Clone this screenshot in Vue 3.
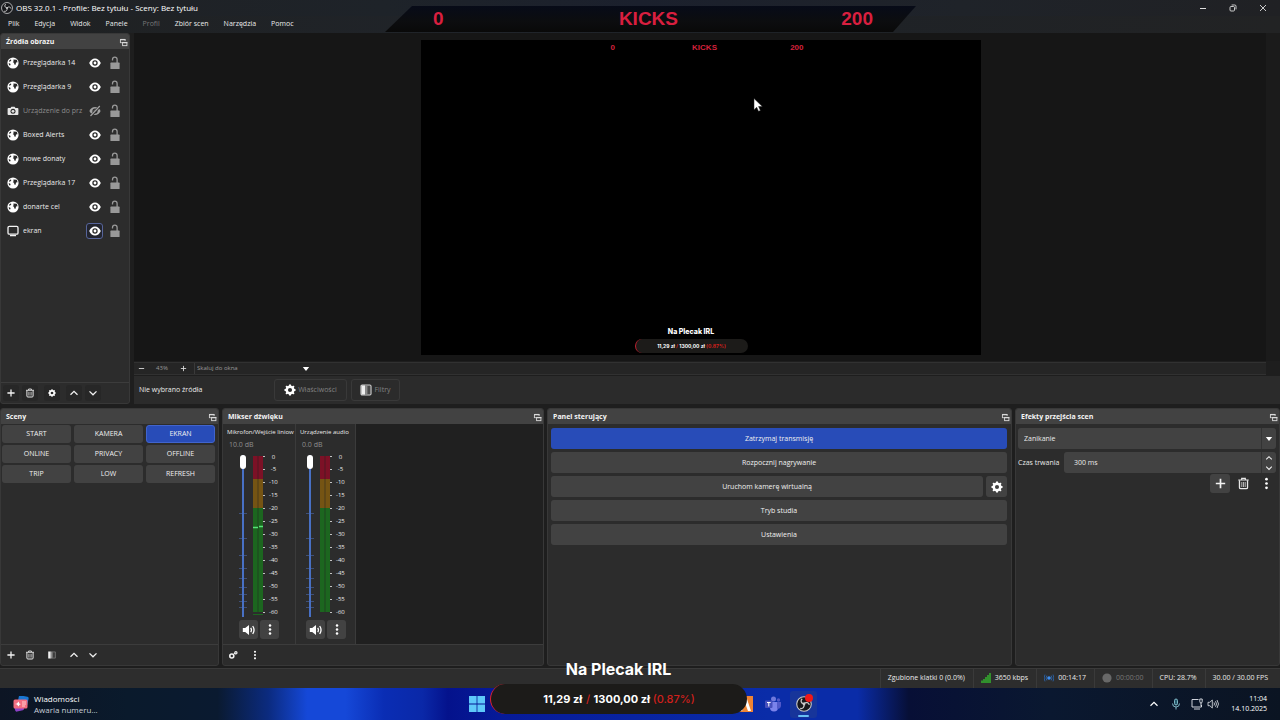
<script setup>
import { ref } from 'vue'

const menus = [
  { name: 'Plik' }, { name: 'Edycja' }, { name: 'Widok' }, { name: 'Panele' },
  { name: 'Profil', off: true }, { name: 'Zbiór scen' }, { name: 'Narzędzia' }, { name: 'Pomoc' }
]

const sources = [
  { name: 'Przeglądarka 14', icon: 'globe' },
  { name: 'Przeglądarka 9', icon: 'globe' },
  { name: 'Urządzenie do prz', icon: 'camera', hidden: true },
  { name: 'Boxed Alerts', icon: 'globe' },
  { name: 'nowe donaty', icon: 'globe' },
  { name: 'Przeglądarka 17', icon: 'globe' },
  { name: 'donarte cel', icon: 'globe' },
  { name: 'ekran', icon: 'monitor', focus: true }
]

const scenes = ['START', 'KAMERA', 'EKRAN', 'ONLINE', 'PRIVACY', 'OFFLINE', 'TRIP', 'LOW', 'REFRESH']
const activeScene = ref('EKRAN')

const channels = [
  { name: 'Mikrofon/Wejście liniow', db: '10.0 dB', peak: true },
  { name: 'Urządzenie audio', db: '0.0 dB', peak: false }
]
const scale = [0, -5, -10, -15, -20, -25, -30, -35, -40, -45, -50, -55, -60]
const faderTicks = [58, 83, 100, 113, 123, 132, 139, 146, 152]
</script>

<template>
  <div class="desktop">
    <svg class="defs" aria-hidden="true">
      <symbol id="globe" viewBox="0 0 12 12">
        <circle cx="6" cy="6" r="5.6" fill="#fff" />
        <path d="M6.4 2.400 9.800 2.800l.8 2.400-1.600.4-.4 2.200-1.300-.3-.3-1.700-1.200-.6.800-1z M2.200 3.600l1.400-1.200.8.500-.6 1.200-1.500 1z M1.600 6.200l1.500.3.500 1-.5 1.100-.9-.4z" fill="#2b2b2b" />
      </symbol>
      <symbol id="camera" viewBox="0 0 12 12">
        <path d="M1.500 3h2l.9-1.300h3.200L8.500 3h2q.9 0 .9.9v5.200q0 .9-.9.9h-9q-.9 0-.9-.9V3.900q0-.9.9-.9z" fill="#e6e6e6" />
        <circle cx="6" cy="6.300" r="2.500" fill="#2b2b2b" /><circle cx="6" cy="6.300" r="1.400" fill="#e6e6e6" />
      </symbol>
      <symbol id="monitor" viewBox="0 0 12 12">
        <rect x="1" y="1.400" width="10" height="7.800" rx="1.300" fill="none" stroke="#f4f4f4" stroke-width="1.300" />
        <path d="M3 10.600h6" stroke="#f4f4f4" stroke-width="1.200" />
      </symbol>
      <symbol id="eye" viewBox="0 0 12 12">
        <path d="M.2 6Q2.300 1.400 6 1.400T11.800 6Q9.700 10.600 6 10.600T.2 6z" fill="#fff" />
        <circle cx="6" cy="6" r="2.700" fill="#2b2b2b" /><circle cx="6" cy="6" r="1.400" fill="#fff" />
      </symbol>
      <symbol id="eyeoff" viewBox="0 0 12 12">
        <path d="M.4 6Q2.300 1.900 6 1.900T11.600 6Q9.700 10.100 6 10.100T.4 6z" fill="#a2a2a2" />
        <circle cx="6" cy="6" r="2.600" fill="#2b2b2b" /><circle cx="6" cy="6" r="1.300" fill="#a2a2a2" />
        <path d="M1.300 11.600 11.300.8" stroke="#2b2b2b" stroke-width="2.600" /><path d="M1.500 11 10.800 1" stroke="#a2a2a2" stroke-width="1.200" />
      </symbol>
      <symbol id="lock" viewBox="0 0 12 14">
        <path d="M3.500 4.600V3.400a2.300 2.300 0 0 1 4.600 0V7" fill="none" stroke="#989898" stroke-width="1.300" />
        <rect x="1.400" y="6.600" width="9.200" height="6.400" rx=".6" fill="#989898" />
      </symbol>
      <symbol id="float" viewBox="0 0 10 10">
        <path d="M1.600 5.600V1.600h5.200v1.600" fill="none" stroke="#dadada" /><path d="M1.200 1.700h6" stroke="#dadada" stroke-width="1.400" /><path d="M1.600 5.200h1.600" stroke="#dadada" />
        <rect x="4" y="4.900" width="4.800" height="3.600" fill="#424242" stroke="#dadada" /><path d="M3.600 5.200h5.600" stroke="#dadada" stroke-width="1.400" />
      </symbol>
      <symbol id="plus" viewBox="0 0 10 10"><path d="M5 1.400v7.200M1.400 5h7.200" stroke="#f2f2f2" stroke-width="1.300" /></symbol>
      <symbol id="trash" viewBox="0 0 10 10">
        <path d="M1 2.300h8M3.600 2V1h2.800v1" fill="none" stroke="#e8e8e8" stroke-width=".9" />
        <path d="M1.900 2.500v5.500q0 1 1 1h4.200q1 0 1-1V2.500" fill="none" stroke="#e8e8e8" />
        <path d="M3.700 3.800v3.800M5 3.800v3.800M6.300 3.800v3.800" stroke="#b4b4b4" stroke-width=".8" />
      </symbol>
      <symbol id="gear" viewBox="0 0 12 12">
        <circle cx="6" cy="6" r="3.300" fill="none" stroke="#fff" stroke-width="2.500" />
        <path d="M6 .5v2M6 9.500v2M.5 6h2M9.500 6h2M2.100 2.100l1.500 1.500M8.400 8.400l1.500 1.500M2.100 9.900l1.500-1.500M8.400 3.600l1.500-1.500" stroke="#fff" stroke-width="2" />
      </symbol>
      <symbol id="up" viewBox="0 0 10 10"><path d="M1.500 6.800 5 3.400l3.500 3.400" fill="none" stroke="#f2f2f2" stroke-width="1.300" /></symbol>
      <symbol id="down" viewBox="0 0 10 10"><path d="M1.500 3.400 5 6.800l3.500-3.400" fill="none" stroke="#f2f2f2" stroke-width="1.300" /></symbol>
      <symbol id="caret" viewBox="0 0 8 6"><path d="M.8 1h6.400L4 5z" fill="#fff" /></symbol>
      <symbol id="filter" viewBox="0 0 10 10">
        <rect x=".8" y=".8" width="8.400" height="8.400" rx="1" fill="#4a4a4a" stroke="#cfcfcf" stroke-width=".9" />
        <path d="M1.200 1.200h3v7.600h-3z" fill="#f0f0f0" /><path d="M4.200 1.200h2v7.600h-2z" fill="#8c8c8c" />
      </symbol>
      <symbol id="filtersm" viewBox="0 0 10 10">
        <path d="M1.200 1.500h2.600v7H1.200z" fill="#f0f0f0" /><path d="M3.800 1.500h2v7h-2z" fill="#8c8c8c" />
        <path d="M5.800 1.900h2.600v6.200H5.800" fill="#3c3c3c" stroke="#777" stroke-width=".8" />
      </symbol>
      <symbol id="dots" viewBox="0 0 4 12"><circle cx="2" cy="2" r="1.250" fill="#fff" /><circle cx="2" cy="6" r="1.250" fill="#fff" /><circle cx="2" cy="10" r="1.250" fill="#fff" /></symbol>
      <symbol id="speaker" viewBox="0 0 14 12">
        <path d="M.8 4h2.400L7 .9v10.200L3.200 8H.8z" fill="#fff" />
        <path d="M8.700 3.800q1.500 2.200 0 4.400M10.700 2q2.700 4 0 8" fill="none" stroke="#fff" stroke-width="1.300" />
      </symbol>
      <symbol id="gears" viewBox="0 0 10 10">
        <circle cx="3.800" cy="6" r="2" fill="none" stroke="#f2f2f2" stroke-width="1.600" />
        <circle cx="7.900" cy="2.800" r="1.100" fill="none" stroke="#f2f2f2" stroke-width="1.200" /><path d="M5 4.600 7 3.300" stroke="#f2f2f2" />
      </symbol>
      <symbol id="obs" viewBox="0 0 16 16">
        <circle cx="8" cy="8" r="7.300" fill="#17181b" stroke="#c9c9c9" stroke-width="1.100" />
        <path d="M7.600 7.800C4.600 7 4.500 4.300 6.200 2.800M8 7.800c2-2.200 4.800-1.200 5.300 1M8 8.200c.8 3-1.400 4.800-3.800 4.200" fill="none" stroke="#c9c9c9" stroke-width="1.300" />
        <circle cx="8" cy="8" r="1.400" fill="#c9c9c9" />
      </symbol>
    </svg>

    <header class="titlebar">
      <svg class="i12"><use href="#obs" /></svg>
      <span class="title">OBS 32.0.1 - Profile: Bez tytułu - Sceny: Bez tytułu</span>
      <div class="winbtns">
        <button aria-label="Minimalizuj"><svg viewBox="0 0 8 8"><path d="M1 4.500h6" stroke="#ddd" /></svg></button>
        <button aria-label="Przywróć"><svg viewBox="0 0 8 8"><rect x="1" y="2.500" width="4.500" height="4.500" rx="1" fill="none" stroke="#ddd" stroke-width=".9" /><path d="M2.600 1h3.200Q7 1 7 2.200v3.200" fill="none" stroke="#ddd" stroke-width=".9" /></svg></button>
        <button aria-label="Zamknij"><svg viewBox="0 0 8 8"><path d="M1 1l6 6M7 1 1 7" stroke="#ddd" stroke-width=".9" /></svg></button>
      </div>
    </header>
    <nav class="menubar">
      <button v-for="m in menus" :key="m.name" :disabled="m.off">{{ m.name }}</button>
    </nav>

    <main class="upper">
      <section class="dock sources">
        <h2>Źródła obrazu<svg class="i10"><use href="#float" /></svg></h2>
        <ul>
          <li v-for="s in sources" :key="s.name" :class="{ off: s.hidden }">
            <svg class="i12"><use :href="'#' + s.icon" /></svg>
            <span>{{ s.name }}</span>
            <button class="vis" :class="{ focus: s.focus }" aria-label="Widoczność"><svg class="i12"><use :href="s.hidden ? '#eyeoff' : '#eye'" /></svg></button>
            <button class="lk" aria-label="Zablokuj"><svg><use href="#lock" /></svg></button>
          </li>
        </ul>
        <footer class="tools">
          <button v-for="t in ['plus', 'trash', 'gear', 'up', 'down']" :key="t" :aria-label="t"><svg class="i10" :class="t"><use :href="'#' + t" /></svg></button>
        </footer>
      </section>

      <section class="stage">
        <div class="preview">
          <div class="canvas">
            <div class="mini-kicks"><span>0</span><span>KICKS</span><span>200</span></div>
            <div class="mini-goal">
              <b>Na Plecak IRL</b>
              <p>11,29 zł <i>/</i> 1300,00 zł <em>(0.87%)</em></p>
            </div>
            <svg class="cursor" viewBox="0 0 10 14"><path d="M1 .5v11.300l2.700-2.500 1.800 4 1.900-.8-1.800-4h3.700z" fill="#fff" stroke="#222" stroke-width=".5" /></svg>
          </div>
        </div>
        <div class="zoombar">
          <button aria-label="Pomniejsz"><svg viewBox="0 0 8 8"><path d="M1 4h6" stroke="#ddd" /></svg></button>
          <span>43%</span>
          <button aria-label="Powiększ"><svg viewBox="0 0 8 8"><path d="M1 4h6M4 1v6" stroke="#ddd" /></svg></button>
          <div class="fit"><select aria-label="Skalowanie"><option>Skaluj do okna</option></select><svg><use href="#caret" /></svg></div>
        </div>
        <div class="context">
          <span>Nie wybrano źródła</span>
          <button class="wide" disabled><svg class="i12"><use href="#gear" /></svg>Właściwości</button>
          <button class="narrow" disabled><svg class="i12"><use href="#filter" /></svg>Filtry</button>
        </div>
      </section>
    </main>

    <div class="docks">
      <section class="dock">
        <h2>Sceny<svg class="i10"><use href="#float" /></svg></h2>
        <div class="grid">
          <button v-for="s in scenes" :key="s" class="btn" :class="{ active: s === activeScene }" @click="activeScene = s">{{ s }}</button>
        </div>
        <footer class="tools">
          <button v-for="t in ['plus', 'trash', 'filtersm', 'up', 'down']" :key="t" :aria-label="t"><svg class="i10"><use :href="'#' + t" /></svg></button>
        </footer>
      </section>

      <section class="dock">
        <h2>Mikser dźwięku<svg class="i10"><use href="#float" /></svg></h2>
        <div class="mixer">
          <div v-for="(c, n) in channels" :key="c.name" class="channel" :class="{ first: n === 0 }">
            <label :for="'vol' + n">{{ c.name }}</label>
            <small>{{ c.db }}</small>
            <div class="levels">
              <div class="fader">
                <svg viewBox="0 0 8 162"><path v-for="t in faderTicks" :key="t" :d="`M0 ${t}.500h8`" stroke="#3f5078" /></svg>
                <input :id="'vol' + n" type="range" min="0" max="100" value="100">
              </div>
              <svg class="meter" viewBox="0 0 14 162">
                <path d="M0 1h10v23H0z" fill="#7c1126" /><path d="M0 24h10v29H0z" fill="#755413" /><path d="M0 53h10v104H0z" fill="#1c661f" />
                <path d="M5 1v156" stroke="#222" stroke-opacity=".5" />
                <path v-for="(s, k) in scale" :key="s" :d="`M10 ${k * 13 + 1}.500h2`" stroke="#c4c4c4" />
                <g v-if="c.peak"><path d="M0 72.500h5M6 71.500h4" stroke="#55e578" stroke-width="1.500" /><path d="M0 159.500h10" stroke="#1c661f" /></g>
              </svg>
              <ol><li v-for="s in scale" :key="s">{{ s }}</li></ol>
            </div>
            <div class="chbtns">
              <button class="btn" aria-label="Wycisz"><svg class="spk"><use href="#speaker" /></svg></button>
              <button class="btn" aria-label="Opcje"><svg class="dot"><use href="#dots" /></svg></button>
            </div>
          </div>
        </div>
        <footer class="tools mixtools">
          <button aria-label="Zaawansowane"><svg class="i10"><use href="#gears" /></svg></button>
          <button aria-label="Opcje miksera"><svg class="i10"><use href="#dots" /></svg></button>
        </footer>
      </section>

      <section class="dock">
        <h2>Panel sterujący<svg class="i10"><use href="#float" /></svg></h2>
        <div class="controls">
          <button class="btn active">Zatrzymaj transmisję</button>
          <button class="btn">Rozpocznij nagrywanie</button>
          <div class="pair"><button class="btn">Uruchom kamerę wirtualną</button><button class="btn sq" aria-label="Konfiguruj kamerę"><svg class="i12"><use href="#gear" /></svg></button></div>
          <button class="btn">Tryb studia</button>
          <button class="btn">Ustawienia</button>
        </div>
      </section>

      <section class="dock">
        <h2>Efekty przejścia scen<svg class="i10"><use href="#float" /></svg></h2>
        <div class="trans">
          <div class="combo"><select aria-label="Przejście"><option>Zanikanie</option></select><svg><use href="#caret" /></svg></div>
          <div class="dur">
            <label for="dur">Czas trwania</label>
            <div class="spin">
              <input id="dur" type="text" value="300 ms">
              <div><button aria-label="Więcej"><svg><use href="#up" /></svg></button><button aria-label="Mniej"><svg><use href="#down" /></svg></button></div>
            </div>
          </div>
          <div class="tbtns">
            <button class="btn" aria-label="Dodaj"><svg><use href="#plus" /></svg></button>
            <button aria-label="Usuń"><svg><use href="#trash" /></svg></button>
            <button aria-label="Więcej opcji"><svg><use href="#dots" /></svg></button>
          </div>
        </div>
      </section>
    </div>

    <div class="status">
      <span>Zgubione klatki 0 (0.0%)</span>
      <span><svg class="i10" viewBox="0 0 10 10"><path d="M1 10V7.500M3 10V6M5 10V4M7 10V2M9 10V0" stroke="#35c72e" stroke-width="1.300" /></svg>3650 kbps</span>
      <span><svg class="i10" viewBox="0 0 10 10"><circle cx="5" cy="5" r="1.800" fill="#3d8df0" /><path d="M2.800 2.600q-1.600 2.400 0 4.800M7.200 2.600q1.600 2.400 0 4.800M1 1.600q-1.800 3.400 0 6.800M9 1.600q1.800 3.400 0 6.800" fill="none" stroke="#2a62a8" stroke-width=".9" /></svg>00:14:17</span>
      <span class="dim"><svg class="i10" viewBox="0 0 10 10"><circle cx="5" cy="5" r="4.600" fill="#686868" /></svg>00:00:00</span>
      <span>CPU: 28.7%</span>
      <span>30.00 / 30.00 FPS</span>
    </div>

    <footer class="taskbar">
      <a class="news" href="#">
        <svg viewBox="0 0 16 16"><rect x="5" y="0" width="10" height="9" rx="1.500" fill="#1976d2" transform="rotate(12 10 5)" /><rect x="1.500" y="7" width="9" height="8" rx="1.500" fill="#8d42c8" transform="rotate(-14 6 11)" /><rect x=".5" y="3.500" width="14" height="9" rx="1.500" fill="#f26d80" /><path d="m5.500 5.500 1 2.200 1.500.3-1.500.8-1 1.700L4 8.500 2 8l2-.6z" fill="#fff" /><path d="M9 6h4M9 8h4M9 10h3" stroke="#ffd0d0" /></svg>
        <span><b>Wiadomości</b>Awaria numeru...</span>
      </a>
      <div class="apps">
        <button aria-label="Start"><svg viewBox="0 0 16 16"><path d="M0 0h7.600v7.600H0zM8.400 0H16v7.600H8.400zM0 8.400h7.600V16H0zM8.400 8.400H16V16H8.400z" fill="#5ec8fa" /></svg></button>
        <button class="orange" aria-label="Aplikacja"><svg viewBox="0 0 16 16"><rect width="16" height="16" fill="#ee8434" /><path d="m3 15 4-12h3l4 12h-3l-3-8-3 8z" fill="#fff" /></svg></button>
        <button class="teams" aria-label="Teams"><svg viewBox="0 0 16 16"><circle cx="8.500" cy="3" r="2.500" fill="#6f78dc" /><circle cx="13.500" cy="4" r="1.700" fill="#5059c9" /><path d="M5 6h8v5.500a4 4 0 0 1-8 0z" fill="#7b83eb" /><path d="M12 6h4v4a3 3 0 0 1-4 2.600z" fill="#5059c9" /><rect y="4.500" width="7.500" height="7.500" rx="1" fill="#4650bd" /><path d="M2 6.500h3.600M3.800 6.500v4" stroke="#fff" /></svg></button>
        <button class="obsapp" aria-label="OBS"><svg viewBox="0 0 16 16"><use href="#obs" /></svg></button>
      </div>
      <div class="tray">
        <svg viewBox="0 0 10 10"><path d="M1.500 6.800 5 3.400l3.500 3.400" fill="none" stroke="#fff" stroke-width="1.200" /></svg>
        <svg class="mic" viewBox="0 0 10 12"><rect x="3.500" y="1" width="3" height="6" rx="1.500" fill="#24586a" stroke="#8ac5d2" stroke-width=".9" /><path d="M1.500 5.500a3.500 3.500 0 0 0 7 0M5 9v2.500" fill="none" stroke="#8ac5d2" stroke-width=".9" /></svg>
        <svg class="net" viewBox="0 0 12 12"><path d="M7.500 1.500H1v7.500h9.500V7" fill="none" stroke="#e4e8ee" stroke-width=".9" /><path d="M3 11h6M8.800 1v2.500q0 1.500 1.200 1.500t1.200-1.500V1zM10 5v3" fill="none" stroke="#e4e8ee" stroke-width=".9" /></svg>
        <svg class="vol" viewBox="0 0 12 12"><path d="M1 4.300h1.800L5.300 2v8L2.800 7.700H1z" fill="none" stroke="#e4e8ee" stroke-width=".8" /><path d="M7 4.500q1 1.500 0 3M8.500 3.200q2 2.800 0 5.600M10 2q3 4 0 8" fill="none" stroke="#e4e8ee" stroke-width=".8" /></svg>
        <time>11:04<br>14.10.2025</time>
      </div>
    </footer>

    <div class="kicks"><span>0</span><span>KICKS</span><span>200</span></div>
    <div class="goal">
      <b>Na Plecak IRL</b>
      <p>11,29 zł <i>/</i> 1300,00 zł <em>(0.87%)</em></p>
    </div>
  </div>
</template>

<style>
html, body { margin: 0; background: #1f1f1f; }
</style>

<style scoped>
* { box-sizing: border-box; margin: 0; padding: 0; }
.desktop { position: relative; display: flex; flex-direction: column; height: 100vh; overflow: hidden; background: #1e1e1e; color: #eaeaea; font: 7px/12px "Open Sans", "Noto Sans", sans-serif; }
.defs { position: absolute; width: 0; height: 0; }
button, input, select { font: inherit; color: inherit; background: none; border: 0; outline: 0; }
button { display: flex; align-items: center; justify-content: center; }
select { appearance: none; }
svg { display: block; flex: none; }
.i12 { width: 12px; height: 12px; }
.i10 { width: 10px; height: 10px; }

.titlebar { display: flex; align-items: center; gap: 3px; height: 16px; padding: 0 2px 0 1px; background: linear-gradient(90deg, #1f2124, #1e2329 30%, #1b202d 50%, #1f2329 75%, #202124); color: #fff; font-size: 8px; }
.winbtns { display: flex; margin-left: auto; }
.winbtns button { width: 30px; height: 14px; }
.winbtns svg { width: 8px; height: 8px; }
.menubar { display: flex; gap: 1px; height: 17px; padding-left: 1px; background: linear-gradient(90deg, #1f2122, #20242a 40%, #1e2227 60%, #222324); }
.menubar button { padding: 0 7px; height: 16px; }
.menubar button:disabled { color: #777; }

.upper { flex: 1; min-height: 0; display: flex; gap: 4px; }
.dock { display: flex; flex-direction: column; min-width: 0; min-height: 0; background: #2c2c2c; border: 1px solid #383838; border-radius: 3px; overflow: hidden; }
.dock h2 { display: flex; align-items: center; justify-content: space-between; height: 15px; flex: none; padding: 0 1px 0 5px; background: #424242; color: #f4f4f4; font-size: 7px; font-weight: 700; }
.dock h2 svg { width: 9px; height: 9px; margin-top: 2px; }
.sources { width: 130px; }
.sources ul { flex: 1; list-style: none; padding-top: 2px; }
.sources li { display: flex; align-items: center; height: 24px; padding: 0 8px 0 6px; }
.sources li span { flex: 1; min-width: 0; margin: 0 2px 0 4px; overflow: hidden; white-space: nowrap; }
.sources .off span { color: #8b8b8b; }
.vis { width: 17px; height: 16px; border: 1px solid transparent; border-radius: 3px; }
.vis.focus { border-color: #56649a; background: #22242e; }
.lk { width: 12px; margin-left: 6px; }
.lk svg { width: 12px; height: 14px; }
.tools { display: flex; align-items: center; gap: 3px; height: 21px; flex: none; border-top: 1px solid #3c3c3c; padding-left: 2px; }
.tools button { width: 16px; height: 16px; }
.tools button:nth-child(3) { margin: 0 3px; }
.tools .gear { width: 8px; height: 8px; }
.sources .tools button { background: #272727; border-radius: 3px; }
.mixtools { gap: 6px; }

.stage { flex: 1; min-width: 0; display: flex; flex-direction: column; }
.preview { flex: 1; min-height: 0; background: #161616; border-right: 14px solid #1b1b1b; display: flex; justify-content: center; padding: 7px 0 6px 1px; }
.canvas { position: relative; aspect-ratio: 16 / 9; height: 100%; background: #000; }
.mini-kicks { position: absolute; top: 2px; left: 190px; right: 177px; display: flex; justify-content: space-between; color: #d5203c; font: 700 8px/12px "Liberation Sans", sans-serif; }
.mini-kicks span:nth-child(2) { margin-left: 4px; }
.mini-goal, .goal { text-align: center; color: #fff; font-family: Inter, sans-serif; }
.mini-goal { position: absolute; bottom: 2px; left: 50%; width: 113px; margin-left: -66px; }
.mini-goal b { display: block; font-size: 7px; line-height: 10px; font-weight: 800; }
.mini-goal p { margin-top: 2px; height: 14px; border-radius: 7px; background: #1c1b19; border-left: 1px solid #c02030; font-size: 5px; line-height: 14px; font-weight: 700; }
i, em { font-style: normal; color: #d0201c; }
.cursor { position: absolute; left: 332px; top: 58px; width: 10px; height: 14px; }
.zoombar { display: flex; align-items: center; height: 13px; background: #252525; border: 1px solid #313131; border-width: 1px 0; margin: 1px 14px 0 0; color: #999; font-size: 6px; line-height: 11px; }
.zoombar button { width: 14px; height: 11px; }
.zoombar button svg { width: 7px; height: 7px; }
.zoombar > span { width: 28px; text-align: center; }
.fit { display: flex; align-items: center; width: 116px; margin-left: 4px; border-left: 1px solid #3a3a3a; }
.fit select { flex: 1; padding-left: 2px; }
.fit svg { width: 8px; height: 6px; }
.context { display: flex; align-items: center; height: 28px; margin-top: 1px; padding-left: 5px; background: #2b2b2b; }
.context > span { width: 135px; }
.context button { height: 22px; gap: 2px; border: 1px solid #393939; border-radius: 3px; color: #828282; }
.wide { width: 73px; }
.narrow { width: 49px; margin-left: 4px; }

.docks { display: grid; grid-template-columns: 219px 322px minmax(0, 1fr) 265px; gap: 3px; height: 258px; margin-top: 4px; }
.btn { height: 21px; border-radius: 3px; background: #424242; color: #f0f0f0; }
.btn.active { background: #284cb8; }
.grid { flex: 1; display: grid; grid-template-columns: repeat(3, 1fr); grid-auto-rows: 18px; gap: 2px 3px; padding: 1px 3px 0 1px; }
.grid .btn { height: 18px; }
.grid .btn.active { border: 1px solid #4164cc; }
.mixer { flex: 1; display: flex; background: #202020; }
.channel { width: 60px; padding: 2px 3px 0 4px; background: #2c2c2c; border-right: 1px solid #3b3b3b; }
.channel.first { width: 73px; padding-right: 0; }
.channel label { display: block; white-space: nowrap; font-size: 6px; line-height: 12px; }
.channel small { display: block; margin-left: 2px; color: #8e8e8e; font-size: 7px; line-height: 14px; }
.levels { display: flex; height: 162px; margin-top: 3px; padding-left: 6px; }
.first .levels { padding-left: 12px; }
.fader { position: relative; width: 8px; margin-right: 6px; }
.fader svg { width: 8px; height: 162px; }
.fader input { position: absolute; left: 0; top: 0; width: 8px; height: 162px; appearance: none; writing-mode: vertical-lr; direction: rtl; }
.fader input::-webkit-slider-runnable-track { width: 2px; height: 162px; margin: 0 3px; background: #4870c4; }
.fader input::-webkit-slider-thumb { appearance: none; width: 6px; height: 14px; margin-left: -2px; border-radius: 3px; background: #fff; }
.meter { width: 14px; height: 162px; }
.levels ol { list-style: none; font-size: 6px; line-height: 13px; margin: -5px 0 0 2px; text-align: center; }
.levels li { height: 13px; }
.levels li:first-child { padding-top: 1px; }
.chbtns { display: flex; gap: 2px; padding-left: 6px; margin-top: 3px; }
.first .chbtns { padding-left: 12px; }
.chbtns .btn { width: 19px; height: 19px; }
.spk { width: 14px; height: 12px; }
.dot { width: 4px; height: 13px; }
.controls { display: flex; flex-direction: column; gap: 3px; padding: 4px 4px 0 3px; }
.pair { display: flex; gap: 3px; }
.pair .btn:first-child { flex: 1; }
.sq { width: 21px; }
.trans { display: flex; flex-direction: column; gap: 3px; padding: 4px 3px 0 2px; }
.combo, .spin { display: flex; align-items: center; height: 21px; background: #424242; border-radius: 3px; }
.combo select { flex: 1; height: 21px; padding-left: 6px; border-right: 1px solid #333; }
.combo svg { width: 8px; height: 6px; margin: 0 3px; }
.dur { display: flex; align-items: center; gap: 2px; }
.dur label { min-width: 44px; white-space: nowrap; }
.spin { flex: 1; min-width: 0; }
.spin input { flex: 1; min-width: 0; height: 21px; padding-left: 10px; border-right: 1px solid #333; }
.spin > div { width: 14px; }
.spin button { width: 14px; height: 10px; }
.spin svg { width: 8px; height: 8px; }
.tbtns { display: flex; justify-content: flex-end; gap: 3px; margin-top: -2px; }
.tbtns button { width: 20px; height: 19px; }
.tbtns svg { width: 13px; height: 13px; }

.status { display: flex; justify-content: flex-end; height: 20px; margin-top: 2px; padding-right: 4px; background: #2d2d2d; border-top: 1px solid #3a3a3a; }
.status span { display: flex; align-items: center; gap: 4px; padding: 0 8px 1px 7px; border-left: 1px solid #3a3a3a; }
.status .dim { color: #777; }

.taskbar { display: grid; grid-template-columns: 1fr auto 1fr; align-items: center; height: 32px; background: linear-gradient(90deg, #0d1524, #0a1a2c 10%, #0a1a30 17%, #0b2b80 21%, #1548d8 24%, #1548d8 27%, #0a2db4 30%, #0a28a8 33%, #04128c 35%, #061a98 39%, #0a2ca8 60%, #0a2ca8 67%, #070f36 71%, #0a1830 82%, #0b1422); color: #fff; }
.news { display: flex; align-items: center; gap: 5px; padding-left: 13px; color: #c8ced8; text-decoration: none; font-size: 8px; line-height: 11px; }
.news svg { width: 16px; height: 16px; }
.news b { display: block; color: #fff; font-weight: 500; }
.apps { display: flex; align-items: center; padding-left: 6px; }
.apps svg { width: 16px; height: 16px; }
.apps .orange { margin-left: 252px; }
.apps .teams { margin: 0 9px 0 12px; }
.apps .obsapp { position: relative; width: 27px; height: 27px; border-radius: 3px; background: #17359a; }
.obsapp::before { content: ""; position: absolute; right: 4px; top: 3px; width: 8px; height: 8px; border-radius: 50%; background: #f01818; }
.obsapp::after { content: ""; position: absolute; left: 8px; bottom: 1px; width: 11px; height: 2px; border-radius: 1px; background: #68bff5; }
.tray { display: flex; align-items: center; justify-content: flex-end; padding-right: 13px; }
.tray svg { width: 10px; height: 10px; }
.tray .mic { width: 12px; height: 12px; margin-left: 11px; }
.tray .net { width: 12px; height: 12px; margin-left: 9px; }
.tray .vol { width: 12px; height: 12px; margin-left: 4px; }
.tray time { margin-left: 12px; text-align: right; font-size: 7px; line-height: 10px; }

.kicks { position: absolute; top: 6px; left: calc(50% - 255px); width: 531px; height: 26px; padding: 0 43px 0 48px; display: flex; align-items: center; justify-content: space-between; clip-path: polygon(27px 0, 100% 0, 508px 100%, 0 100%); background: linear-gradient(#070b18, #0c0d0f 60%, #090909); color: #d91f3f; font: 700 19px/26px "Liberation Sans", Arial, sans-serif; }
.kicks span:nth-child(2) { margin-left: 12px; }
.goal { position: absolute; left: calc(50% - 150px); bottom: 6px; width: 257px; }
.goal b { display: block; font-size: 16px; line-height: 20px; font-weight: 700; }
.goal p { margin-top: 5px; height: 30px; border-radius: 15px; background: #1c1b19; border-left: 1px solid #e02030; font-size: 11px; line-height: 30px; font-weight: 700; }
.goal i { margin: 0 1px; font-weight: 500; }
.goal em { font-weight: 500; }
</style>
